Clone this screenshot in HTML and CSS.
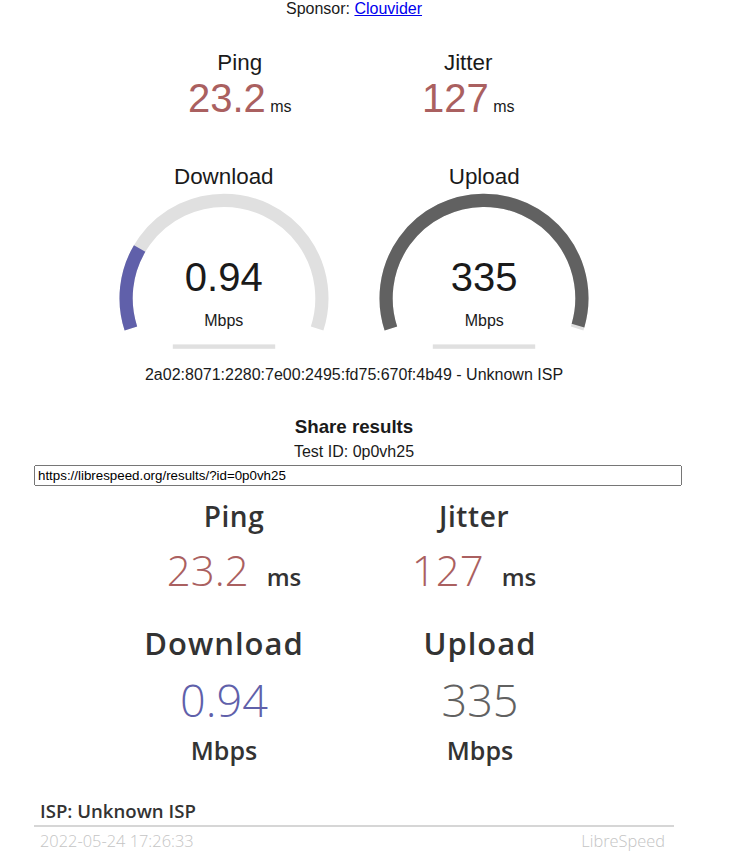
FILE: index.html
```html
<!DOCTYPE html>
<html lang="en">
<head>
<meta charset="utf-8">
<title>LibreSpeed</title>
<link rel="stylesheet" href="styles.css">
</head>
<body>
<div class="page">
  <div class="sponsor">Sponsor: <a href="#">Clouvider</a></div>
  <div class="test">
    <div class="test-group">
      <div class="test-area2">
        <div class="test-name">Ping</div>
        <div class="meter-text">23.2</div>
        <div class="unit">ms</div>
      </div>
      <div class="test-area2">
        <div class="test-name">Jitter</div>
        <div class="meter-text">127</div>
        <div class="unit">ms</div>
      </div>
    </div>
    <div class="test-group">
      <div class="test-area">
        <svg class="gauge" width="256" height="200" viewBox="0 0 256 200">
          <path class="gauge-bk" d="M34.89 166.45 A97.9 97.9 0 1 1 221.11 166.45"/>
          <path class="gauge-dl" d="M34.89 166.45 A97.9 97.9 0 0 1 43.65 86.50"/>
          <rect class="gauge-prog" x="76.8" y="182.4" width="102.4" height="4.4"/>
        </svg>
        <div class="test-name">Download</div>
        <div class="meter-text">0.94</div>
        <div class="unit">Mbps</div>
      </div>
      <div class="test-area">
        <svg class="gauge" width="256" height="200" viewBox="0 0 256 200">
          <path class="gauge-bk" d="M34.89 166.45 A97.9 97.9 0 1 1 221.11 166.45"/>
          <path class="gauge-ul" d="M34.89 166.45 A97.9 97.9 0 1 1 222.0 163.57"/>
          <rect class="gauge-prog" x="76.8" y="182.4" width="102.4" height="4.4"/>
        </svg>
        <div class="test-name">Upload</div>
        <div class="meter-text">335</div>
        <div class="unit">Mbps</div>
      </div>
    </div>
    <div class="ip-area"><span class="ip">2a02:8071:2280:7e00:2495:fd75:670f:4b49 - Unknown ISP</span></div>
    <div class="share-area">
      <h3>Share results</h3>
      <p>Test ID: <span class="test-id">0p0vh25</span></p>
      <input type="text" class="results-url" value="https://librespeed.org/results/?id=0p0vh25" readonly>
      <div class="result-img">
        <div class="ri-row ri-row1">
          <div class="ri-cell">
            <div class="ri-label">Ping</div>
            <div class="ri-value ri-small ri-ping">23.2<span class="ri-unit">ms</span></div>
          </div>
          <div class="ri-cell">
            <div class="ri-label">Jitter</div>
            <div class="ri-value ri-small ri-ping">127<span class="ri-unit">ms</span></div>
          </div>
        </div>
        <div class="ri-row ri-row2">
          <div class="ri-cell">
            <div class="ri-big-label">Download</div>
            <div class="ri-value ri-dl">0.94</div>
            <div class="ri-mbps">Mbps</div>
          </div>
          <div class="ri-cell">
            <div class="ri-big-label">Upload</div>
            <div class="ri-value ri-ul">335</div>
            <div class="ri-mbps">Mbps</div>
          </div>
        </div>
        <div class="ri-isp">ISP: Unknown ISP</div>
        <div class="ri-sep"></div>
        <div class="ri-foot">
          <span class="ri-time">2022-05-24 17:26:33</span>
          <span class="ri-mark">LibreSpeed</span>
        </div>
      </div>
    </div>
  </div>
</div>
</body>
</html>
```
FILE: styles.css
```css
html, body {
  margin: 0;
  padding: 0;
  background: #ffffff;
}

body {
  font-family: "Liberation Sans", Arial, sans-serif;
  font-size: 16px;
  color: #1a1a1a;
}

.page {
  width: 708px;
  text-align: center;
}

.sponsor a {
  color: #0000ee;
  text-decoration: underline;
}

.test {
  margin-top: 32px;
}

.test-group {
  display: block;
}

/* ping / jitter */
.test-area2 {
  display: inline-block;
  width: 224px;
  height: 112px;
  box-sizing: border-box;
  text-align: center;
}

.test-area2 .test-name {
  display: block;
  font-size: 22.4px;
}

.test-area2 .meter-text {
  display: inline-block;
  font-size: 40px;
  color: #aa6060;
}

.test-area2 .unit {
  display: inline-block;
}

/* gauges */
.test-area {
  display: inline-block;
  width: 256px;
  height: 200px;
  position: relative;
  box-sizing: border-box;
}

.test-area .gauge {
  position: absolute;
  top: 0;
  left: 0;
  display: block;
}

.gauge-bk,
.gauge-dl,
.gauge-ul {
  fill: none;
  stroke-width: 13.2;
  stroke-linecap: butt;
}

.gauge-bk { stroke: #e0e0e0; }
.gauge-dl { stroke: #6060aa; }
.gauge-ul { stroke: #616161; }
.gauge-prog { fill: #e0e0e0; }

.test-area .test-name {
  position: absolute;
  top: 2.24px;
  left: 0;
  width: 100%;
  font-size: 22.4px;
}

.test-area .meter-text {
  position: absolute;
  bottom: 62px;
  left: 0;
  width: 100%;
  font-size: 40px;
}

.test-area .unit {
  position: absolute;
  bottom: 32px;
  left: 0;
  width: 100%;
}

/* share */
.share-area {
  width: 640px;
  margin: 32px auto 0;
}

.share-area > * {
  display: block;
  width: 100%;
  margin: 4px 0;
}

.share-area h3 {
  font-size: 18.72px;
  font-weight: bold;
  margin: 4.68px 0;
}

.results-url {
  font-family: "Liberation Sans", Arial, sans-serif;
  font-size: 13.333px;
  color: #000;
  padding: 1px 2px;
  box-sizing: content-box;
}

/* result image */
.result-img {
  height: 366px;
  text-align: left;
  font-family: "Open Sans", sans-serif;
  color: #333333;
  overflow: hidden;
}

.ri-row {
  display: grid;
  grid-template-columns: 240px 240px;
}

.ri-row1 {
  margin-left: 80px;
  padding-top: 12px;
}

.ri-row2 {
  margin-left: 70px;
  column-gap: 16px;
  margin-top: 37px;
}

.ri-cell {
  text-align: center;
}

.ri-label {
  font-size: 28px;
  line-height: 28px;
  font-weight: 600;
  letter-spacing: 0.6px;
}

.ri-big-label {
  font-size: 31px;
  line-height: 31px;
  font-weight: 600;
  letter-spacing: 1px;
}

.ri-value {
  font-size: 45px;
  line-height: 45px;
  font-weight: 300;
  margin-top: 17.5px;
}

.ri-value.ri-small {
  font-size: 42px;
  line-height: 42px;
  margin-top: 19.6px;
}

.ri-ping { color: #aa6060; }
.ri-dl { color: #6060aa; }
.ri-ul { color: #616161; }

.ri-unit {
  font-size: 24px;
  line-height: 1;
  font-weight: 600;
  color: #333333;
  margin-left: 18px;
}

.ri-mbps {
  font-size: 25px;
  line-height: 25px;
  font-weight: 600;
  margin-top: 16px;
}

.ri-isp {
  font-size: 18.6px;
  line-height: 18.6px;
  font-weight: 600;
  padding-left: 6px;
  margin-top: 39px;
}

.ri-sep {
  height: 2px;
  background: #d6d6d6;
  margin-top: 5px;
}

.ri-foot {
  display: flex;
  justify-content: space-between;
  font-size: 16.4px;
  line-height: 16.4px;
  font-weight: 300;
  color: #c4c4c4;
  padding: 0 9px 0 6px;
  margin-top: 6px;
}
```
